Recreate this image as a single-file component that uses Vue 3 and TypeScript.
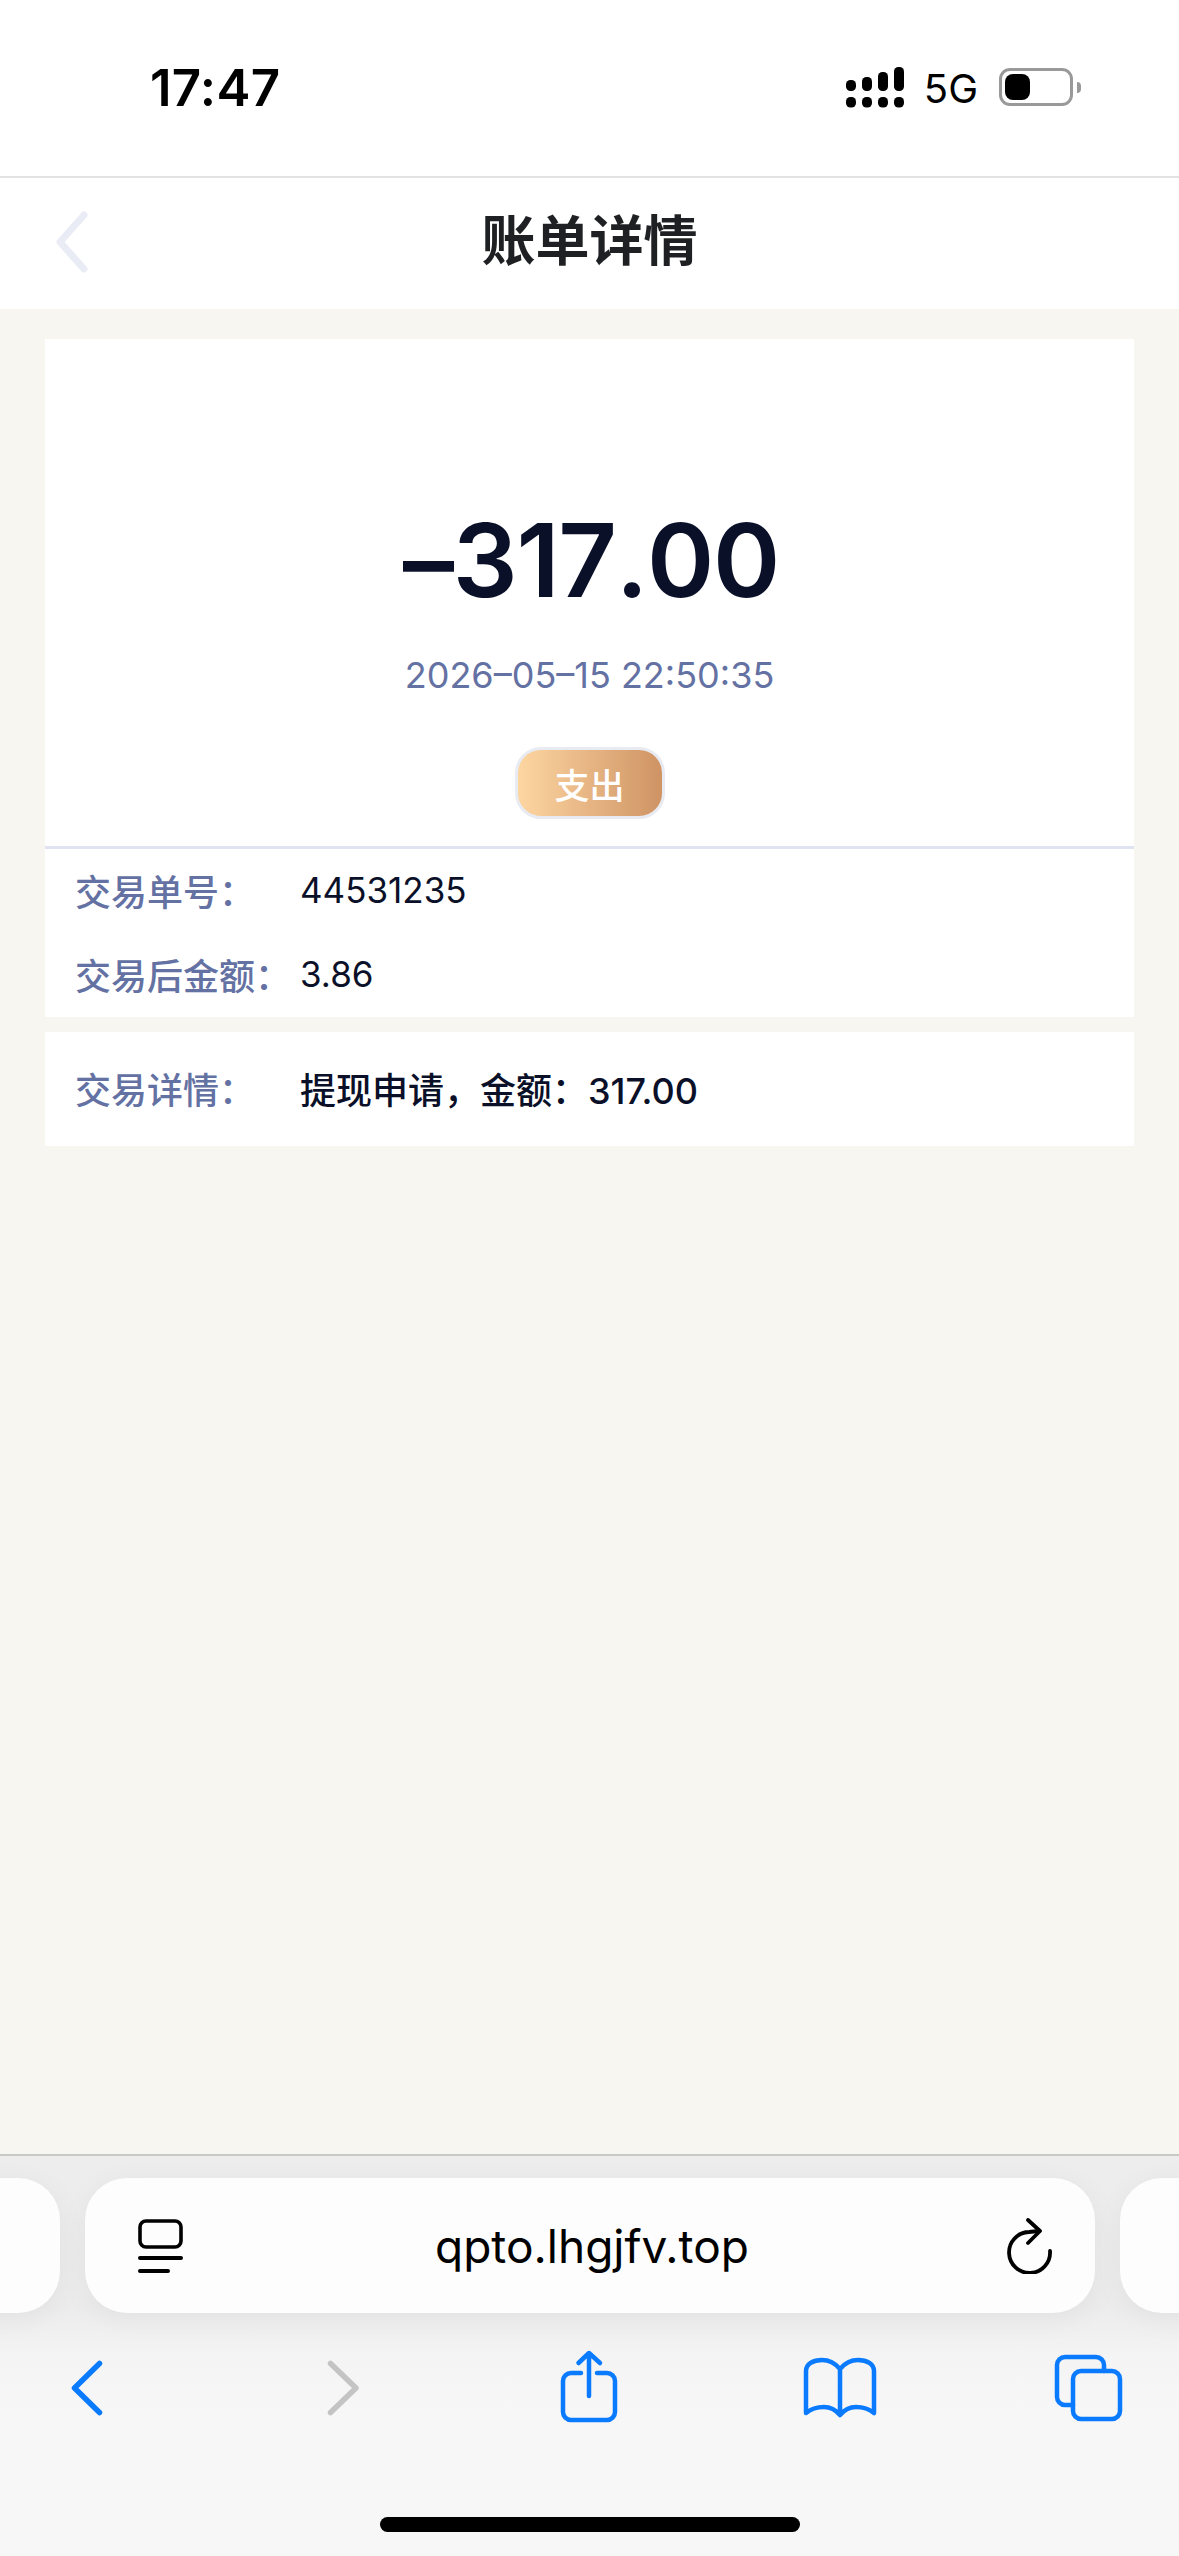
<template>
  <div class="page">
    <!-- 状态栏 -->
    <header class="status-bar">
      <span class="clock">17:47</span>
      <div class="status-right">
        <svg class="signal" width="58" height="41" viewBox="0 0 58 41">
          <rect v-for="bar in signalBars" :key="bar.x" :x="bar.x" :y="bar.y" width="10" :height="bar.h" rx="4.5" fill="#000" />
          <rect v-for="x in [0, 16, 32, 48]" :key="x" :x="x" y="30" width="10" height="10.5" rx="4.5" fill="#000" />
        </svg>
        <span class="network">5G</span>
        <div class="battery">
          <div class="battery-body"><div class="battery-level"></div></div>
          <div class="battery-cap"></div>
        </div>
      </div>
    </header>

    <!-- 导航栏 -->
    <nav class="nav-bar">
      <svg class="nav-back" width="40" height="64" viewBox="0 0 40 64">
        <path d="M33 5 L9 32 L33 59" fill="none" stroke="#e9ecf5" stroke-width="7" stroke-linecap="round" stroke-linejoin="round" />
      </svg>
      <h1 class="nav-title">账单详情</h1>
    </nav>

    <main class="content">
      <section class="card summary">
        <div class="amount">–317.00</div>
        <div class="date">2026–05–15 22:50:35</div>
        <span class="tag">支出</span>
      </section>
      <section class="card rows">
        <div v-for="row in infoRows" :key="row.label" class="row">
          <span class="row-label">{{ row.label }}</span>
          <span class="row-value">{{ row.value }}</span>
        </div>
      </section>
      <section class="card detail">
        <div class="row">
          <span class="row-label">交易详情&#xFF1A;</span>
          <span class="row-value detail-value">提现申请&#xFF0C;金额&#xFF1A;317.00</span>
        </div>
      </section>
    </main>

    <!-- 浏览器工具栏 -->
    <footer class="toolbar">
      <div class="tab-strip">
        <div class="pill"></div>
        <div class="pill pill-main">
          <svg class="pill-icon" width="45" height="54" viewBox="0 0 45 54">
            <rect x="2" y="2" width="41" height="26" rx="6" fill="none" stroke="#000" stroke-width="3.6" />
            <rect x="0" y="37" width="45" height="4" rx="2" fill="#000" />
            <rect x="0" y="50" width="32" height="4" rx="2" fill="#000" />
          </svg>
          <span class="url">qpto.lhgjfv.top</span>
          <svg class="pill-icon" width="46" height="56" viewBox="0 0 46 56">
            <path d="M44 33 A20.500 20.500 0 1 1 23 14 L33 13" fill="none" stroke="#000" stroke-width="3.800" stroke-linecap="round" />
            <path d="M22 2 L34 13 L22 25" fill="none" stroke="#000" stroke-width="3.800" stroke-linecap="round" stroke-linejoin="round" />
          </svg>
        </div>
        <div class="pill"></div>
      </div>

      <div class="tool-row">
        <svg width="80" height="80" viewBox="0 0 80 80">
          <path d="M52.500 18.500 L27.500 43 L52.500 67.500" class="tool-line" />
        </svg>
        <svg width="80" height="80" viewBox="0 0 80 80">
          <path d="M33.500 18.500 L59 43 L33.500 67.500" class="tool-line tool-off" />
        </svg>
        <svg width="80" height="80" viewBox="0 0 80 80">
          <path d="M42 9 V51 M31.500 18 L42 8 L53 18" class="tool-line thin" />
          <path d="M34 28 H24 a8 8 0 0 0 -8 8 V67 a8 8 0 0 0 8 8 H60 a8 8 0 0 0 8 -8 V36 a8 8 0 0 0 -8 -8 H50" class="tool-line thin" />
        </svg>
        <svg width="80" height="80" viewBox="0 0 80 80">
          <path d="M43 24 V70 M43 24 C38 18 32 15 25 15 C16 15 9 19 9 26 V68 C15 63 21 62 27 62 C33 62 38 64 43 70 C48 64 53 62 59 62 C65 62 71 63 77 68 V26 C77 19 70 15 61 15 C54 15 48 18 43 24 Z" class="tool-line thin" />
        </svg>
        <svg width="80" height="80" viewBox="0 0 80 80">
          <path d="M57 26 V20 a8 8 0 0 0 -8 -8 H18 a8 8 0 0 0 -8 8 V52 a8 8 0 0 0 8 8 H26" class="tool-line thin" />
          <rect x="26" y="26" width="47" height="48" rx="8" class="tool-line thin" />
        </svg>
      </div>

      <div class="home-indicator"></div>
    </footer>
  </div>
</template>

<script setup lang="ts">
interface InfoRow {
  label: string
  value: string
}

const signalBars = [
  { x: 0, y: 13, h: 11 },
  { x: 16, y: 10, h: 14 },
  { x: 32, y: 5, h: 19 },
  { x: 48, y: 0, h: 24 }
]

const infoRows: InfoRow[] = [
  { label: '交易单号\uFF1A', value: '44531235' },
  { label: '交易后金额\uFF1A', value: '3.86' }
]
</script>

<style>
body {
  background: #f7f6f1;
}
</style>

<style scoped>
.page {
  width: 1179px;
  height: 2556px;
  display: flex;
  flex-direction: column;
  overflow: hidden;
  background: #f7f6f1;
  font-family: Inter, "Noto Sans CJK SC", sans-serif;
}

.status-bar {
  height: 178px;
  box-sizing: border-box;
  padding: 66px 98px 0 150px;
  display: flex;
  justify-content: space-between;
  align-items: flex-start;
  background: #fff;
  border-bottom: 2px solid #e2e2e2;
}

.clock {
  font-size: 51px;
  line-height: 44px;
  font-weight: 600;
  color: #000;
  letter-spacing: 0.3px;
}

.status-right {
  display: flex;
  align-items: flex-start;
}

.signal {
  margin-top: 1px;
}

.network {
  margin: 1px 0 0 20px;
  font-size: 40px;
  line-height: 44px;
  color: #000;
}

.battery {
  display: flex;
  align-items: center;
  margin-left: 21px;
  margin-top: 2px;
}

.battery-body {
  width: 74px;
  height: 38px;
  box-sizing: border-box;
  border: 3px solid #999;
  border-radius: 11px;
  padding: 3px;
}

.battery-level {
  width: 25px;
  height: 100%;
  background: #000;
  border-radius: 8px;
}

.battery-cap {
  width: 4px;
  height: 11px;
  margin-left: 4px;
  background: #999;
  border-radius: 0 4px 4px 0;
}

.nav-bar {
  position: relative;
  height: 131px;
  display: flex;
  align-items: center;
  justify-content: center;
  background: #fff;
}

.nav-back {
  position: absolute;
  left: 51px;
  top: 32px;
}

.nav-title {
  margin: 0 0 3px;
  font-size: 54px;
  line-height: 60px;
  font-weight: 700;
  color: #1f2023;
}

.content {
  flex: 1;
  padding: 30px 45px 0;
  display: flex;
  flex-direction: column;
}

.card {
  background: #fff;
}

.summary {
  height: 510px;
  box-sizing: border-box;
  padding-top: 161px;
  border-bottom: 3px solid #e0e4f2;
  display: flex;
  flex-direction: column;
  align-items: center;
}

.amount {
  padding-left: 3px;
  font-size: 102px;
  line-height: 120px;
  font-weight: 600;
  font-kerning: none;
  letter-spacing: -1.300px;
  color: #0b1029;
}

.date {
  margin-top: 30px;
  font-size: 36px;
  line-height: 50px;
  color: #6471a3;
}

.tag {
  margin-top: 47px;
  width: 150px;
  height: 72px;
  box-sizing: border-box;
  border: 3px solid #e9ebf2;
  border-radius: 26px;
  background: linear-gradient(90deg, #fdd6a1, #cf9364);
  display: flex;
  align-items: center;
  justify-content: center;
  font-size: 35px;
  font-weight: 500;
  color: #fff;
}

.detail {
  margin-top: 15px;
  height: 114px;
  display: flex;
  align-items: center;
}

.row {
  height: 84px;
  box-sizing: border-box;
  padding: 0 0 3px 30px;
  display: flex;
  align-items: center;
}

.row-label {
  width: 225px;
  flex-shrink: 0;
  font-size: 36px;
  font-weight: 500;
  color: #6471a3;
}

.row-value {
  font-size: 35px;
  color: #0b1029;
}

.detail-value {
  font-size: 36px;
  font-weight: 500;
}

.toolbar {
  height: 402px;
  box-sizing: border-box;
  border-top: 2px solid #c8c8c6;
  padding-top: 22px;
  background: linear-gradient(180deg, #ededed 0, #ececec 150px, #f4f4f4 200px, #f7f7f7 260px);
}

.tab-strip {
  display: flex;
  justify-content: center;
  gap: 25px;
}

.pill {
  width: 1010px;
  height: 135px;
  flex-shrink: 0;
  background: #fdfdfd;
  border-radius: 42px;
  box-shadow: 0 6px 30px rgba(0, 0, 0, 0.05);
}

.pill-main {
  box-sizing: border-box;
  padding: 0 42px 0 53px;
  display: flex;
  align-items: center;
  justify-content: space-between;
}

.pill-icon {
  flex-shrink: 0;
}

.url {
  margin-right: 5px;
  font-size: 46px;
  color: #000;
}

.tool-row {
  margin-top: 32px;
  padding-left: 47px;
  display: flex;
  gap: 170px;
}

.tool-line {
  fill: none;
  stroke: #0a7aff;
  stroke-width: 5.500;
  stroke-linecap: round;
  stroke-linejoin: round;
}

.tool-line.thin {
  stroke-width: 4.500;
}

.tool-off {
  stroke: #c4c4c4;
}

.home-indicator {
  width: 420px;
  height: 15px;
  margin: 92px 0 0 380px;
  background: #000;
  border-radius: 8px;
}
</style>
